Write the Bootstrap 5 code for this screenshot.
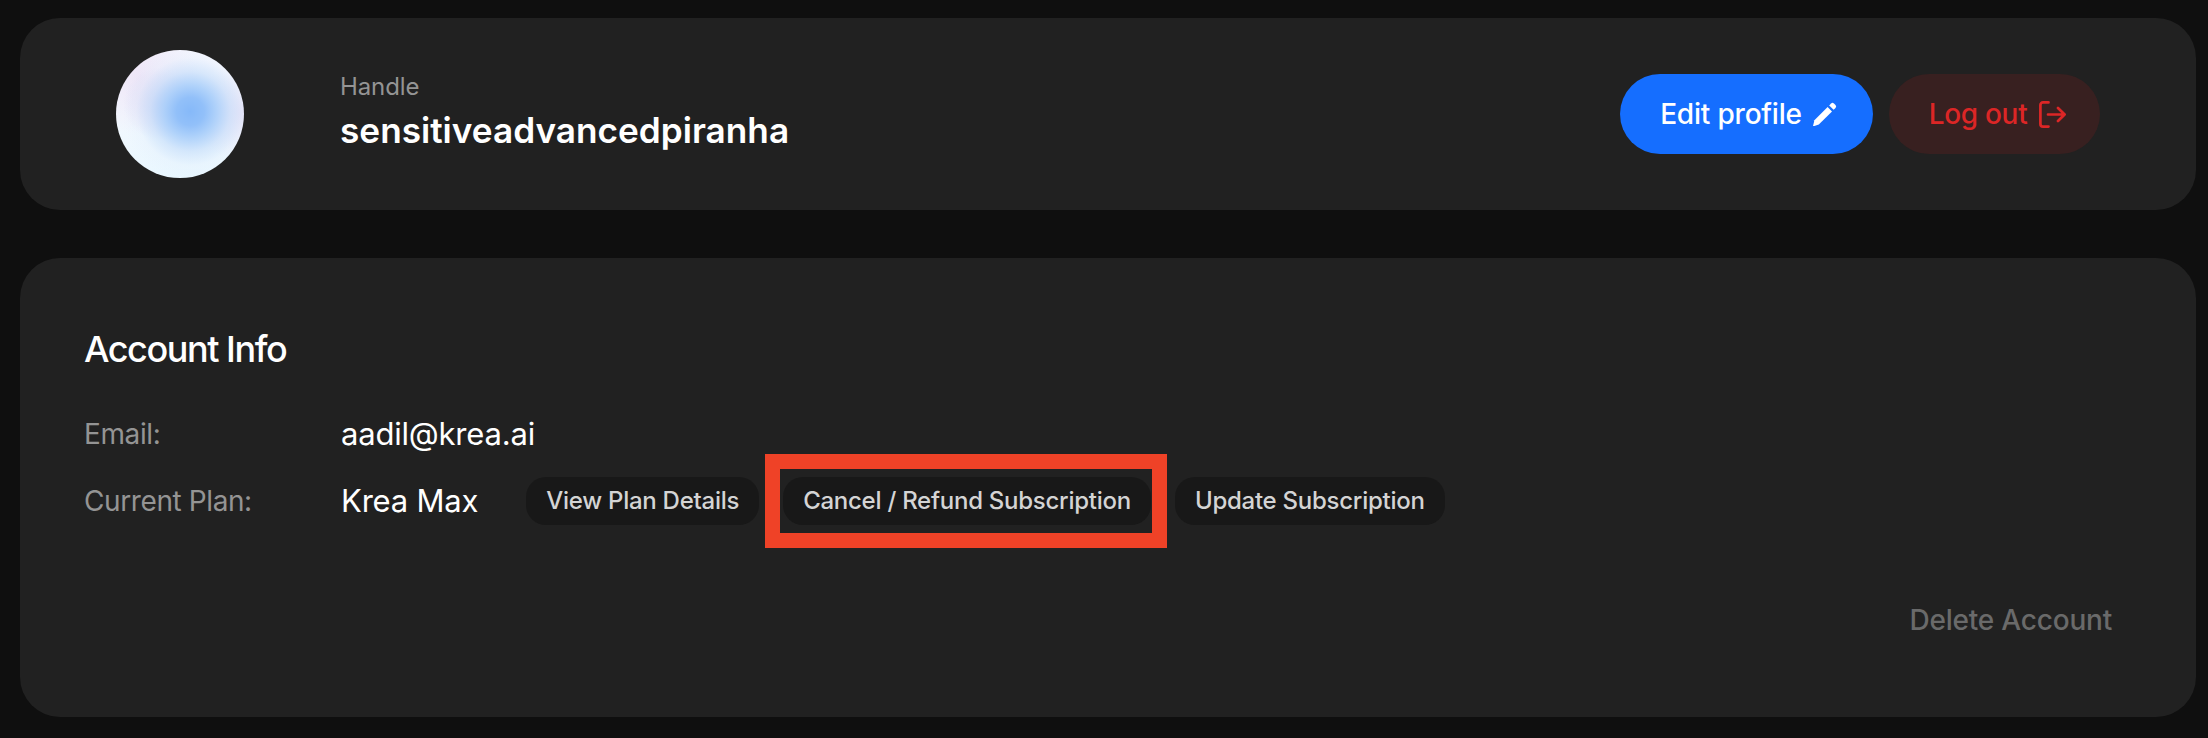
<!DOCTYPE html>
<html lang="en">
<head>
<meta charset="utf-8">
<title>Profile</title>
<link href="https://cdn.jsdelivr.net/npm/bootstrap@5.3.0/dist/css/bootstrap.min.css" rel="stylesheet">
<style>
html, body { background: #0f0f0f; height: 738px; overflow: hidden; }
body { font-family: Inter, "Liberation Sans", sans-serif; color: #fff; }
.page-wrap { padding: 18px 12px 21px 20px; gap: 48px; height: 738px; }
.panel { background: #212121; border-radius: 40px; }
.panel-top { height: 192px; padding: 0 96px; }
.panel-info { flex: 1; padding: 71px 84px 0 64px; }
.avatar { width: 128px; height: 128px; border-radius: 50%; flex: none; margin-right: 97px;
  background:
    radial-gradient(circle at 58% 48%, #86b9f9 0, #92c0f9 14%, rgba(170,207,250,.92) 26%, rgba(198,222,250,.65) 40%, rgba(225,238,252,.3) 54%, rgba(235,245,255,0) 68%),
    radial-gradient(circle at 99% 49%, #e6dff6 0, rgba(230,223,246,0) 34%),
    radial-gradient(circle at 34% 42%, #d9d5f2 0, rgba(217,213,242,0) 32%),
    radial-gradient(circle at 19% 21%, #eee5f7 0, rgba(238,229,247,0) 40%),
    linear-gradient(180deg, #f6f6fe 0, #f2f8fe 55%, #e9f7ff 100%);
}
.handle-block { padding-bottom: 6px; }
.handle-label { font-size: 24px; line-height: 28px; color: #949494; margin-bottom: 9px; letter-spacing: -.1px; margin-left: -1px; }
.handle-name { font-size: 35.2px; line-height: 40px; font-weight: 600; margin-left: -1px; }
.pill-main { height: 80px; border-radius: 40px; border: 0; font-size: 28px; font-weight: 500; color: #fff; letter-spacing: -.2px; }
.pill-edit { width: 253px; background: #156eff; margin-right: 16px; gap: 11px; padding: 0 0 0 4px; }
.pill-edit:hover, .pill-edit:active { background: #156eff !important; color: #fff !important; }
.pill-out { width: 211px; background: #382020; color: #dc2626; gap: 12px; letter-spacing: -.3px; padding: 0 0 0 6px; }
.pill-out:hover { background: #382020; color: #dc2626; }
.info-title { font-size: 36px; line-height: 40px; font-weight: 500; letter-spacing: -1.45px; margin: 0 0 41px; }
.info-key { width: 257px; flex: none; font-size: 28px; color: #949494; letter-spacing: -.4px; }
.info-val { font-size: 31px; font-weight: 400; letter-spacing: -.2px; }
.info-row-a { height: 48px; margin-bottom: 19px; }
.info-row-b { height: 48px; }
.plan-line { gap: 24px; }
.info-val-plan { margin-right: 24px; }
.pill-small { height: 48px; border: 0; border-radius: 20px; background: #181818; color: #d4d4d4; font-size: 24px; font-weight: 500; letter-spacing: -.26px; padding: 0 20px; white-space: nowrap; }
.pill-small:hover { background: #181818; color: #d4d4d4; }
.annot-wrap { position: relative; }
.annot-box { position: absolute; left: -18px; right: -16px; top: -23px; bottom: -23px; border: 15px solid #ef4227; pointer-events: none; }
.del-link { font-size: 28px; font-weight: 500; color: #6a6a6a; text-decoration: none; margin-top: 74px; letter-spacing: -.2px; }
</style>
</head>
<body>
<main class="d-flex flex-column page-wrap">
  <section class="panel panel-top d-flex align-items-center">
    <div class="avatar"></div>
    <div class="flex-grow-1 handle-block">
      <div class="handle-label">Handle</div>
      <div class="handle-name">sensitiveadvancedpiranha</div>
    </div>
    <div class="d-flex align-items-center">
      <button class="btn pill-main pill-edit d-flex align-items-center justify-content-center">Edit profile
        <svg width="24" height="24" viewBox="0 0 24 24" fill="#fff" aria-hidden="true"><path d="M0 24l1.4-5.8L14.6 5l4.4 4.4L5.8 22.6 1.4 24z"/><path d="M16.2 3.4l1.9-1.9a2 2 0 0 1 2.8 0l1.6 1.6a2 2 0 0 1 0 2.8l-1.9 1.9z"/></svg>
      </button>
      <button class="btn pill-main pill-out d-flex align-items-center justify-content-center">Log out
        <svg width="27" height="27" viewBox="0 0 27 27" fill="none" stroke="#dc2626" stroke-width="2.7" stroke-linecap="round" stroke-linejoin="round" aria-hidden="true"><path d="M9.5 1.4H4A2.6 2.6 0 0 0 1.4 4v19A2.6 2.6 0 0 0 4 25.6h5.5"/><path d="M9 13.5h16.5M19 7l6.6 6.5L19 20"/></svg>
      </button>
    </div>
  </section>
  <section class="panel panel-info d-flex flex-column">
    <h2 class="info-title">Account Info</h2>
    <div class="d-flex align-items-center info-row-a">
      <div class="info-key">Email:</div>
      <div class="info-val">aadil@krea.ai</div>
    </div>
    <div class="d-flex align-items-center info-row-b">
      <div class="info-key">Current Plan:</div>
      <div class="d-flex align-items-center plan-line">
        <div class="info-val info-val-plan">Krea Max</div>
        <button class="btn pill-small">View Plan Details</button>
        <div class="annot-wrap">
          <button class="btn pill-small">Cancel / Refund Subscription</button>
          <div class="annot-box"></div>
        </div>
        <button class="btn pill-small">Update Subscription</button>
      </div>
    </div>
    <div class="d-flex justify-content-end">
      <a href="#" class="del-link">Delete Account</a>
    </div>
  </section>
</main>
<script src="https://cdn.jsdelivr.net/npm/bootstrap@5.3.0/dist/js/bootstrap.bundle.min.js"></script>
</body>
</html>
